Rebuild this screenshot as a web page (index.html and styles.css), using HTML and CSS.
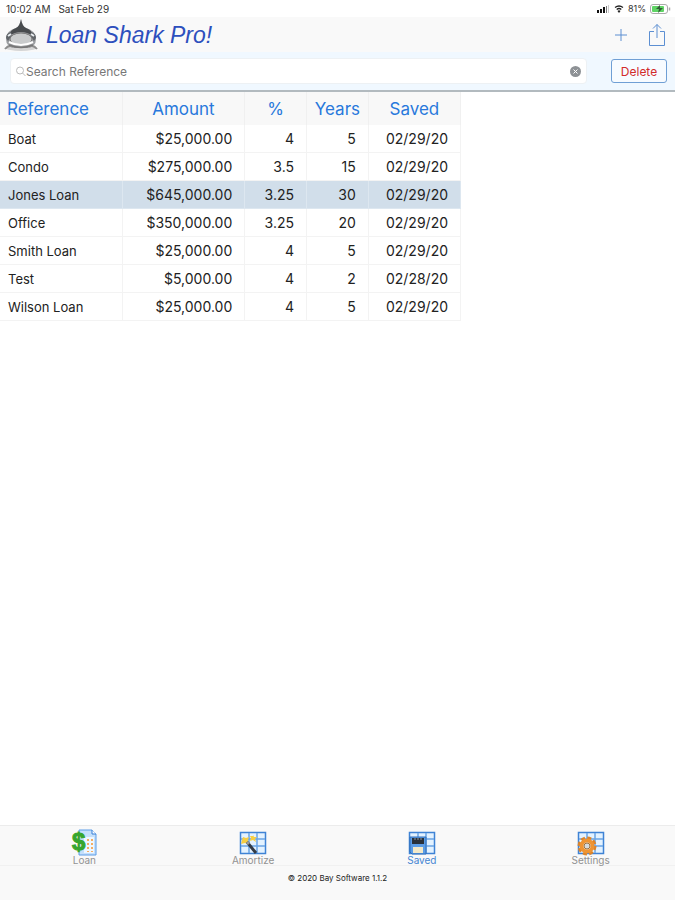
FILE: index.html
```html
<!DOCTYPE html>
<html lang="en">
<head>
<meta charset="utf-8">
<meta name="viewport" content="width=device-width, initial-scale=1">
<title>Loan Shark Pro!</title>
<link rel="stylesheet" href="styles.css">
</head>
<body>
<div class="status">
  <span>10:02 AM</span><span>Sat Feb 29</span>
  <div class="status-right">
    <svg width="14" height="10" viewBox="0 0 14 10"><path d="M1 6h2v3H1zM4 5h2v4H4zM7 3h2v6H7z" fill="#111"/><path d="M10 2h1v7h-1z" fill="#777"/><path d="M12 1h1v8h-1z" fill="#ccc"/></svg>
    <svg width="10" height="10" viewBox="0 0 10 10"><path d="M1 3.500Q5 .5 9 3.500M2.700 5.500Q5 3.500 7.300 5.500" fill="none" stroke="#222" stroke-width="1.300"/><path d="M3.500 7Q5 5.700 6.500 7L5 9z" fill="#222"/></svg>
    <span>81%</span>
    <svg width="21" height="10" viewBox="0 0 21 10"><rect x=".5" y=".5" width="17" height="9" rx="2.500" fill="#fff" stroke="#aaa"/><rect x="2" y="2" width="12" height="6" rx="1" fill="#5fd465"/><path d="M10 1 6 5h3L8 9l5-5h-3z" fill="#345b38"/><path d="M19.500 3.500v3" stroke="#aaa" stroke-width="1.500"/></svg>
  </div>
</div>
<header class="header">
  <svg class="logo" width="34" height="34" viewBox="0 0 34 34">
    <ellipse cx="17" cy="30" rx="15" ry="3" fill="#d5d5d5"/>
    <path d="M1 31q4-5 8-2M33 31q-4-5-8-2" fill="none" stroke="#8d8d8d" stroke-width="2"/>
    <path d="M17 1q1 7 5 9 9 2 10 11 0 8-9 9H11q-9-1-9-9 1-9 10-11 4-2 5-9z" fill="#9b9da0"/>
    <path d="M17 1q1 7 5 9 6 2 7 8-6-4-12-4T5 18q1-6 7-8 4-2 5-9z" fill="#484b4e"/>
    <path d="M2 20q0-5 5-6l1 3-4 6zM32 20q0-5-5-6l-1 3 4 6z" fill="#606468"/>
    <path d="m4 18 3-2M30 18l-3-2" stroke="#e9edf0" stroke-width="2"/>
    <ellipse cx="17" cy="21" rx="11" ry="6" fill="#c9cbcc" stroke="#777"/>
    <path d="M5 24q12 6 24 0" fill="none" stroke="#fff" stroke-width="2"/>
    <path d="M5 27q12 5 24 0" fill="none" stroke="#777" stroke-width="1.500"/>
  </svg>
  <h1>Loan Shark Pro!</h1>
  <button class="icon-button" aria-label="Add"><svg width="14" height="14" viewBox="0 0 14 14"><path d="M7 1v12M1 7h12"/></svg></button>
  <button class="icon-button" aria-label="Share"><svg width="18" height="24" viewBox="0 0 18 24"><path d="M6 8.500H1.500v14h15v-14H12M9 15V1.500M5 5.500l4-4 4 4"/></svg></button>
</header>
<form class="toolbar">
  <div class="search">
    <svg width="10" height="11" viewBox="0 0 10 11"><circle cx="4" cy="4.500" r="3.500"/><path d="m6.500 7 3 3"/></svg>
    <input type="text" aria-label="Search Reference" placeholder="Search Reference">
    <button type="reset" aria-label="Clear search"><svg width="11" height="11" viewBox="0 0 11 11"><circle cx="5.500" cy="5.500" r="5.500" fill="#8d9195"/><path d="m3.500 3.500 4 4m0-4-4 4" stroke="#fff"/></svg></button>
  </div>
  <button class="delete" type="button">Delete</button>
</form>
<main>
  <table>
    <colgroup><col class="c-ref"><col class="c-amount"><col class="c-num"><col class="c-num"><col class="c-saved"></colgroup>
    <thead><tr><th>Reference</th><th>Amount</th><th>%</th><th>Years</th><th>Saved</th></tr></thead>
    <tbody>
      <tr><td>Boat</td><td>$25,000.00</td><td>4</td><td>5</td><td>02/29/20</td></tr>
      <tr><td>Condo</td><td>$275,000.00</td><td>3.5</td><td>15</td><td>02/29/20</td></tr>
      <tr class="selected"><td>Jones Loan</td><td>$645,000.00</td><td>3.25</td><td>30</td><td>02/29/20</td></tr>
      <tr><td>Office</td><td>$350,000.00</td><td>3.25</td><td>20</td><td>02/29/20</td></tr>
      <tr><td>Smith Loan</td><td>$25,000.00</td><td>4</td><td>5</td><td>02/29/20</td></tr>
      <tr><td>Test</td><td>$5,000.00</td><td>4</td><td>2</td><td>02/28/20</td></tr>
      <tr><td>Wilson Loan</td><td>$25,000.00</td><td>4</td><td>5</td><td>02/29/20</td></tr>
    </tbody>
  </table>
</main>
<nav class="tabs">
  <a href="#loan"><svg width="28" height="28" viewBox="0 0 28 28"><path d="M9 1h13l4 4v21H9z" fill="#c5e0fb" stroke="#5c9de6"/><path d="M22 1v4h4" fill="#fff" stroke="#347fd8"/><path d="M14 8h10v16H14z" fill="#eef7ff"/><path d="M18 10v13M22 10v13" stroke="#f5ad62" stroke-width="2" stroke-dasharray="2 2"/><text x="2" y="21" class="dollar">$</text></svg><span>Loan</span></a>
  <a href="#amortize"><svg width="28" height="28" viewBox="0 0 28 28"><path d="M1.500 3.500h25v21h-25z" fill="#e3f2ff" stroke="#3f83d5" stroke-width="1.500"/><path d="M2 10h24M2 17h24M10 4v20M18 4v20" stroke="#6aa4e5" stroke-width="1.500"/><path d="m4 8 3 1 3-1-1 3 1 4-4-1-4 1 1-4zM14 6l1 2h3l-2 2 1 3-3-2-3 1 1-3-1-2h3z" fill="#f6ce43"/><path d="m8 13 9 11" stroke="#333b46" stroke-width="3"/><path d="m8 13 2 2" stroke="#999" stroke-width="3"/></svg><span>Amortize</span></a>
  <a href="#saved" class="current" aria-current="page"><svg width="28" height="28" viewBox="0 0 28 28"><path d="M1.500 3.500h25v21h-25z" fill="#e3f2ff" stroke="#3f83d5" stroke-width="1.500"/><path d="M2 10h24M2 17h24M10 4v20M18 4v20" stroke="#6aa4e5" stroke-width="1.500"/><path d="M2 8h16v17H4l-2-2z" fill="#5b9ce5" stroke="#316eb9"/><path d="M4 9h12v6H4z" fill="#29313a"/><path d="M7 9v2M10 9v2M13 9v2" stroke="#8d99a5"/><path d="M5 18h10v6H5z" fill="#f3e9c9"/></svg><span>Saved</span></a>
  <a href="#settings"><svg width="28" height="28" viewBox="0 0 28 28"><path d="M1.500 3.500h25v21h-25z" fill="#e3f2ff" stroke="#3f83d5" stroke-width="1.500"/><path d="M2 10h24M2 17h24M10 4v20M18 4v20" stroke="#6aa4e5" stroke-width="1.500"/><circle cx="10" cy="17" r="8" fill="none" stroke="#dc842a" stroke-width="3" stroke-dasharray="4 2.280"/><circle cx="10" cy="17" r="5.500" fill="#fff" stroke="#ee9433" stroke-width="4"/><circle cx="10" cy="17" r="3" fill="#d5dadd" stroke="#9b713f"/></svg><span>Settings</span></a>
</nav>
<footer>© 2020 Bay Software 1.1.2</footer>
</body>
</html>
```
FILE: styles.css
```css
* { box-sizing: border-box; }

body {
  margin: 0;
  min-height: 100vh;
  display: flex;
  flex-direction: column;
  background: #fff;
  color: #222;
  font-family: Inter, "Liberation Sans", sans-serif;
}

button {
  padding: 0;
  border: 0;
  background: none;
  font: inherit;
}

svg { display: block; flex: none; }

.status {
  display: flex;
  gap: 8px;
  height: 17px;
  padding: 0 4px 0 6px;
  align-items: center;
  font-size: 10px;
  color: #333;
}

.status-right {
  display: flex;
  align-items: center;
  gap: 4px;
  margin-left: auto;
  font-size: 9px;
}

.header {
  display: flex;
  align-items: center;
  height: 35px;
  padding: 0 9px 0 4px;
  background: #f9f9f9;
}

h1 {
  flex: 1;
  margin: 0 0 0 8px;
  padding-top: 2px;
  font: italic 23px "Liberation Sans", sans-serif;
  color: #2d4fbd;
}

.icon-button + .icon-button { margin-left: 20px; }

.icon-button path {
  fill: none;
  stroke: #5c8fd2;
}

.toolbar {
  display: flex;
  align-items: center;
  gap: 24px;
  height: 40px;
  padding: 0 8px 0 10px;
  background: #f0f8ff;
  border-bottom: 2px solid #b2babf;
}

.search {
  display: flex;
  flex: 1;
  align-items: center;
  height: 26px;
  padding: 0 5px;
  background: #fff;
  border: 1px solid #edf1f4;
  border-radius: 4px;
}

.search > svg {
  fill: none;
  stroke: #bbb;
}

input {
  flex: 1;
  min-width: 0;
  padding: 0;
  border: 0;
  outline: 0;
  background: none;
  font: 12px Inter, sans-serif;
}

input::placeholder { color: #777; }

.delete {
  width: 56px;
  height: 24px;
  border: 1px solid #6f9fd5;
  border-radius: 3px;
  background: #f7fbff;
  color: #d22b2b;
  font-size: 12px;
}

main { flex: 1; }

table {
  width: 68.3%;
  table-layout: fixed;
  border-collapse: separate;
  border-spacing: 0;
}

.c-ref, .c-amount { width: 26.6%; }
.c-num { width: 13.4%; }
.c-saved { width: 20%; }

th {
  height: 33px;
  padding: 0;
  background: #f8f8f8;
  border-right: 1px solid #f0f0f0;
  color: #2878dc;
  font-size: 17px;
  font-weight: 400;
}

th:first-child {
  padding-left: 7px;
  text-align: left;
}

td {
  height: 28px;
  padding: 0 12px 0 0;
  border-right: 1px solid #f3f3f3;
  border-bottom: 1px solid #f3f3f3;
  font-size: 14px;
  line-height: 16px;
  text-align: right;
}

td:first-child {
  padding-left: 8px;
  font-size: 13px;
  text-align: left;
}

.selected td {
  background: #d1deea;
  border-color: #dde7f0;
}

.tabs {
  display: grid;
  grid-template-columns: repeat(4, 1fr);
  height: 41px;
  background: #f9f9f9;
  border-top: 1px solid #ececec;
  border-bottom: 1px solid #f1f1f1;
}

.tabs a {
  display: flex;
  flex-direction: column;
  align-items: center;
  padding-top: 3px;
  color: #929292;
  font-size: 10px;
  line-height: 12px;
  text-decoration: none;
}

.tabs span { margin-top: -3px; z-index: 1; }
.tabs .current { color: #4686d3; }

.dollar {
  fill: #37a52d;
  stroke: #37a52d;
  font: bold 24px "Liberation Sans", sans-serif;
}

footer {
  height: 34px;
  padding-top: 6px;
  background: #f9f9f9;
  font-size: 8px;
  line-height: 12px;
  text-align: center;
}
```
